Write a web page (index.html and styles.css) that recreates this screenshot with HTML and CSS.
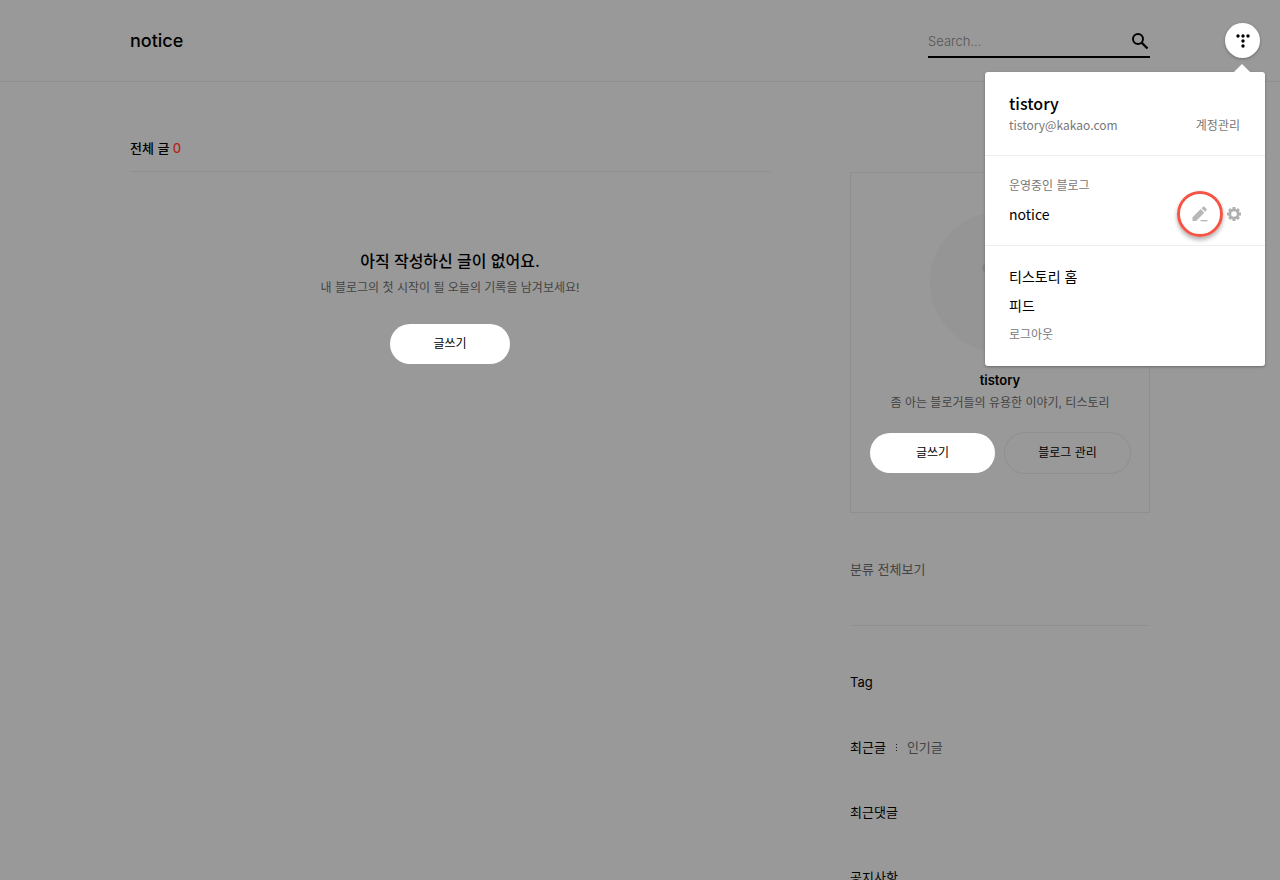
FILE: index.html
```html
<!DOCTYPE html>
<html lang="ko">
<head>
<meta charset="UTF-8">
<meta name="viewport" content="width=device-width, initial-scale=1">
<title>notice</title>
<link rel="stylesheet" href="styles.css">
</head>
<body>

<header class="header">
	<div class="inner header-inner">
		<h1 class="logo"><a href="#">notice</a></h1>
		<form class="search">
			<input type="text" class="search-input" placeholder="Search..." aria-label="Search">
			<button type="submit" class="search-button" aria-label="검색">
				<svg width="18" height="18" viewBox="0 0 18 18" fill="none" stroke="#000">
					<circle cx="6" cy="7" r="5" stroke-width="2"/>
					<path d="M9.500 10.500L15.500 16.500" stroke-width="2.400"/>
				</svg>
			</button>
		</form>
	</div>
</header>

<div class="inner content">
	<main class="main">
		<h2 class="list-title">전체 글 <span class="count">0</span></h2>
		<div class="empty">
			<p class="empty-title">아직 작성하신 글이 없어요.</p>
			<p class="empty-text">내 블로그의 첫 시작이 될 오늘의 기록을 남겨보세요!</p>
			<a href="#" class="button button-write">글쓰기</a>
		</div>
	</main>

	<aside class="sidebar">
		<section class="profile">
			<svg class="avatar" width="140" height="140" viewBox="0 0 140 140">
				<circle cx="70" cy="70" r="70" fill="#959595"/>
				<g fill="#888">
					<circle cx="56" cy="56" r="4"/>
					<circle cx="70" cy="56" r="4"/>
					<circle cx="84" cy="56" r="4"/>
					<circle cx="70" cy="70" r="4"/>
					<circle cx="70" cy="84" r="4"/>
				</g>
			</svg>
			<strong class="profile-name">tistory</strong>
			<p class="profile-text">좀 아는 블로거들의 유용한 이야기, 티스토리</p>
			<div class="profile-buttons">
				<a href="#" class="button">글쓰기</a>
				<a href="#" class="button button-line">블로그 관리</a>
			</div>
		</section>
		<nav class="category"><a href="#">분류 전체보기</a></nav>
		<h3 class="side-title">Tag</h3>
		<div class="side-title tabs">
			<a href="#">최근글</a>
			<svg width="1" height="7" viewBox="0 0 1 7" fill="#222">
				<path d="M0 0h1v1H0zM0 3h1v1H0zM0 6h1v1H0z"/>
			</svg>
			<a href="#" class="tab-off">인기글</a>
		</div>
		<h3 class="side-title">최근댓글</h3>
		<h3 class="side-title">공지사항</h3>
	</aside>
</div>

<div class="account">
	<button type="button" class="account-button" aria-label="계정 메뉴">
		<svg width="14" height="14" viewBox="0 0 14 14">
			<circle cx="2" cy="2" r="1.7"/>
			<circle cx="7" cy="2" r="1.7"/>
			<circle cx="12" cy="2" r="1.7"/>
			<circle cx="7" cy="7" r="1.7"/>
			<circle cx="7" cy="12" r="1.7"/>
		</svg>
	</button>
	<div class="menu">
		<div class="menu-user">
			<strong class="menu-name">tistory</strong>
			<div class="menu-row">
				<span>tistory@kakao.com</span>
				<a href="#">계정관리</a>
			</div>
		</div>
		<div class="menu-blog">
			<p class="menu-label">운영중인 블로그</p>
			<div class="menu-row">
				<a href="#" class="menu-link">notice</a>
				<div class="menu-icons">
					<a href="#" class="write-icon" aria-label="글쓰기">
						<svg width="16" height="16" viewBox="0 0 16 16" fill="#b7b7b7">
							<path d="M.5 11.3L8.700 3.100l3.600 3.600-8.200 8.200H.5z"/>
							<path d="M9.500 2.300L11 .8q.7-.6 1.400 0l2.100 2.100q.7.700 0 1.400l-1.400 1.500z"/>
							<path d="M8.500 14H15.500v1.300H8.500z"/>
						</svg>
					</a>
					<a href="#" class="set-icon" aria-label="블로그 관리">
						<svg width="14" height="14" viewBox="0 0 14 14" fill="none" stroke="#b0b0b0">
							<circle cx="7" cy="7" r="4.200" stroke-width="2.800"/>
							<path d="M7 0v2M7 12v2M0 7h2M12 7h2M2.100 2.100l1.400 1.400M10.500 10.500l1.400 1.400M2.100 11.900l1.400-1.400M10.500 3.500l1.400-1.400" stroke-width="2.900"/>
						</svg>
					</a>
				</div>
			</div>
		</div>
		<div class="menu-links">
			<a href="#" class="menu-link">티스토리 홈</a>
			<a href="#" class="menu-link">피드</a>
			<a href="#">로그아웃</a>
		</div>
	</div>
</div>

</body>
</html>
```
FILE: styles.css
```css
* {
	box-sizing: border-box;
}

body {
	margin: 0;
	background-color: #999;
	color: #000;
	font-family: Inter, "Noto Sans CJK KR", sans-serif;
	font-size: 13px;
	line-height: 20px;
}

h1, h2, h3, p {
	margin: 0;
}

a {
	color: inherit;
	text-decoration: none;
}

svg {
	display: block;
}

.inner {
	max-width: 1020px;
	margin: 0 auto;
}

/* header */
.header {
	border-bottom: 1px solid #8f8f8f;
}

.header-inner {
	display: flex;
	justify-content: space-between;
	padding: 24px 0 23px;
}

.logo {
	font-size: 18px;
	font-weight: 500;
	line-height: 34px;
}

.search {
	display: flex;
	align-items: center;
	width: 222px;
	height: 34px;
	padding-top: 2px;
	border-bottom: 2px solid #000;
}

.search-input {
	flex: 1;
	min-width: 0;
	padding: 0;
	border: 0;
	outline: 0;
	background: none;
	font-family: inherit;
	font-size: 13px;
	font-weight: 300;
}

.search-input::placeholder {
	color: #555;
}

.search-button {
	padding: 0;
	border: 0;
	background: none;
	cursor: pointer;
}

/* content */
.content {
	display: flex;
	gap: 80px;
}

.main {
	flex: 1;
	padding-top: 56px;
}

.list-title {
	padding-bottom: 13px;
	border-bottom: 1px solid #8f8f8f;
	font-size: 13px;
	font-weight: 500;
}

.count {
	color: #b2261c;
}

.empty {
	padding-top: 77px;
	text-align: center;
}

.empty-title {
	font-size: 16px;
	font-weight: 500;
	line-height: 24px;
}

.empty-text {
	margin-top: 5px;
	color: #444;
	font-size: 12px;
}

.button {
	display: block;
	flex: 1;
	border-radius: 20px;
	background-color: #fff;
	font-size: 12px;
	line-height: 40px;
	text-align: center;
}

.button-write {
	width: 120px;
	margin: 26px auto 0;
}

.button-line {
	background: none;
	box-shadow: 0 0 0 1px #8f8f8f;
}

/* sidebar */
.sidebar {
	width: 300px;
	padding-top: 90px;
}

.profile {
	padding: 39px 19px;
	border: 1px solid #8f8f8f;
	text-align: center;
}

.avatar {
	margin: 0 auto 18px;
}

.profile-name {
	display: block;
	font-size: 13px;
	font-weight: 600;
}

.profile-text {
	margin-top: 3px;
	color: #444;
	font-size: 12px;
}

.profile-buttons {
	display: flex;
	gap: 10px;
	margin-top: 20px;
}

.category {
	padding: 46px 0;
	border-bottom: 1px solid #8f8f8f;
	color: #444;
}

.side-title {
	margin-top: 45px;
	font-size: 13px;
	font-weight: 400;
}

.category + .side-title {
	margin-top: 46px;
}

.tabs {
	display: flex;
	align-items: center;
	gap: 10px;
}

.tab-off {
	color: #444;
}

/* account menu, opened over the page */
.account {
	position: absolute;
	top: 23px;
	right: 15px;
	width: 280px;
	font-family: "Noto Sans CJK KR", sans-serif;
}

.account-button {
	display: flex;
	align-items: center;
	justify-content: center;
	width: 35px;
	height: 35px;
	margin: 0 5px 14px auto;
	padding: 0;
	border: 0;
	border-radius: 50%;
	background-color: #fff;
	box-shadow: 0 1px 3px rgba(0, 0, 0, .3);
	cursor: pointer;
}

.menu {
	position: relative;
	border-radius: 3px;
	background-color: #fff;
	box-shadow: 0 1px 3px rgba(0, 0, 0, .3);
	color: #777;
	font-size: 12px;
}

.menu::before {
	content: "";
	position: absolute;
	top: -8px;
	right: 15px;
	border: 8px solid transparent;
	border-top: 0;
	border-bottom-color: #fff;
}

.menu-user {
	padding: 19px 25px 20px 24px;
	border-bottom: 1px solid #eee;
}

.menu-name {
	display: block;
	color: #000;
	font-size: 16px;
	font-weight: 500;
	line-height: 24px;
}

.menu-row {
	display: flex;
	align-items: center;
	justify-content: space-between;
}

.menu-blog {
	padding: 19px 24px 8px;
	border-bottom: 1px solid #eee;
}

.menu-label {
	height: 16px;
}

.menu-icons {
	display: flex;
	align-items: center;
	gap: 4px;
}

.write-icon {
	display: flex;
	align-items: center;
	justify-content: center;
	width: 46px;
	height: 46px;
	border: 3px solid #f55545;
	border-radius: 50%;
	box-shadow: 0 3px 4px rgba(0, 0, 0, .3);
}

.menu-link {
	color: #000;
	font-size: 14px;
}

.menu-links {
	display: flex;
	flex-direction: column;
	gap: 9px;
	padding: 20px 24px 22px;
}
```
